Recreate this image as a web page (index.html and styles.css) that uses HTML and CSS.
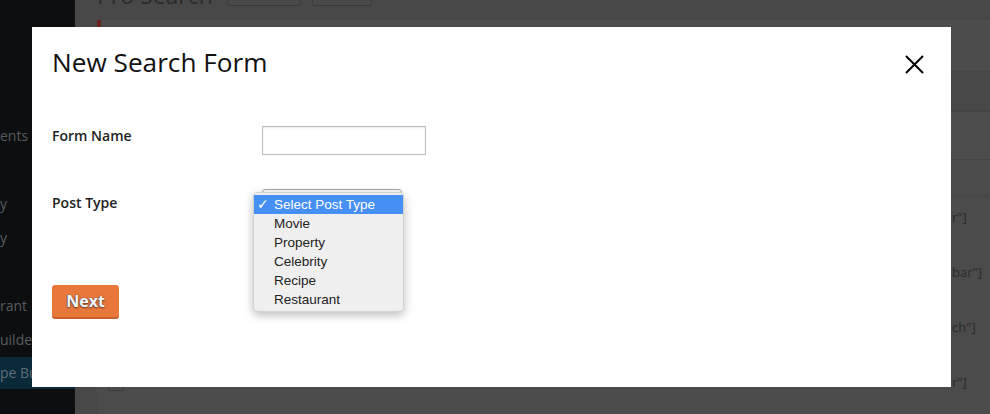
FILE: index.html
```html
<!DOCTYPE html>
<html lang="en">
<head>
<meta charset="utf-8">
<title>New Search Form</title>
<link rel="stylesheet" href="styles.css">
</head>
<body>
<div class="admin">
  <nav class="sidebar">
    <ul class="menu">
      <li>ents</li>
      <li></li>
      <li>y</li>
      <li>y</li>
      <li></li>
      <li>rant</li>
      <li>uilder</li>
      <li class="current">pe Builder</li>
    </ul>
  </nav>
  <main class="content">
    <header class="page-head">
      <h1>Pro Search</h1>
      <span class="ghost-btn wide"></span>
      <span class="ghost-btn"></span>
    </header>
    <div class="notice"></div>
    <div class="tablenav"></div>
    <div class="thead"></div>
    <div class="subhead"></div>
    <div class="row"><span class="cb"></span><span class="code">r"]</span></div>
    <div class="row"><span class="cb"></span><span class="code">bar"]</span></div>
    <div class="row"><span class="cb"></span><span class="code">ch"]</span></div>
    <div class="row"><span class="cb"></span><span class="code">r"]</span></div>
  </main>
</div>

<div class="modal" role="dialog" aria-label="New Search Form">
  <div class="modal-head">
    <h2 class="modal-title">New Search Form</h2>
    <button class="close" aria-label="Close">
      <svg width="19" height="19" viewBox="0 0 19 19"><path d="M1 1L18 18M18 1L1 18" stroke="#000" stroke-width="2" fill="none"/></svg>
    </button>
  </div>
  <div class="form-row first">
    <label class="field-label">Form Name</label>
    <span class="text-input"></span>
  </div>
  <div class="form-row second">
    <label class="field-label">Post Type</label>
    <div class="select-wrap">
      <span class="select-box"></span>
      <ul class="popup">
        <li class="selected"><span class="check">✓</span>Select Post Type</li>
        <li>Movie</li>
        <li>Property</li>
        <li>Celebrity</li>
        <li>Recipe</li>
        <li>Restaurant</li>
      </ul>
    </div>
  </div>
  <button class="next-btn">Next</button>
</div>
</body>
</html>
```
FILE: styles.css
```css
* { box-sizing: border-box; }
html, body { margin: 0; padding: 0; }
body {
  width: 990px;
  height: 414px;
  overflow: hidden;
  background: #484848;
  font-family: "Open Sans", "Liberation Sans", sans-serif;
}
.admin {
  display: flex;
  height: 414px;
}
.sidebar {
  width: 75px;
  flex: none;
  background: #0d0e10;
  overflow: hidden;
}
.menu {
  list-style: none;
  margin: 0;
  padding: 119px 0 0;
}
.menu li {
  height: 34px;
  line-height: 34px;
  font-size: 14px;
  color: #585b5f;
  white-space: nowrap;
}
.menu li.current {
  height: 32px;
  line-height: 32px;
  background: #0b2a39;
  color: #5e6d77;
}
.content {
  flex: 1;
  padding-left: 22px;
  overflow: hidden;
}
.page-head {
  display: flex;
  align-items: flex-start;
  height: 28px;
  margin-top: -22px;
}
.page-head h1 {
  margin: 3px 10px 0 0;
  font-size: 23px;
  line-height: 28px;
  font-weight: 400;
  color: #2a2a2a;
  width: 120px;
  white-space: nowrap;
}
.ghost-btn {
  width: 60px;
  height: 28px;
  border: 1px solid #3b3b3b;
  border-radius: 3px;
  background: #4a4a4a;
  margin-left: 11px;
}
.ghost-btn.wide { width: 74px; margin-left: 0; }
.notice {
  margin-top: 14px;
  height: 52px;
  background: #4c4c4c;
  border-left: 4px solid #6a1e1e;
  border-bottom: 1px solid #474747;
}
.tablenav {
  height: 39px;
  background: #484848;
}
.thead {
  height: 49px;
  background: #4d4d4d;
  border-top: 1px solid #444;
  border-bottom: 1px solid #444;
}
.subhead {
  height: 36px;
  background: #4b4b4b;
  border-bottom: 1px solid #454545;
}
.row {
  display: grid;
  grid-template-columns: 855px 1fr;
  height: 55px;
  background: #4b4b4b;
}
.cb {
  display: block;
  width: 16px;
  height: 16px;
  margin: 14px 0 0 11px;
  border: 1px solid #3a3a3a;
  border-radius: 2px;
}
.code {
  padding-top: 12px;
  font-size: 13px;
  line-height: 18px;
  color: #2a2a2a;
  white-space: nowrap;
}

/* modal */
.modal {
  position: fixed;
  left: 32px;
  top: 27px;
  width: 919px;
  height: 360px;
  background: #fff;
  padding: 17px 27px 0 20px;
}
.modal-head {
  display: flex;
  justify-content: space-between;
  align-items: flex-start;
  height: 36px;
}
.modal-title {
  margin: 0;
  font-size: 26.2px;
  line-height: 36px;
  font-weight: 400;
  color: #111;
}
.close {
  margin-top: 11px;
  padding: 0;
  border: 0;
  background: none;
  width: 19px;
  height: 19px;
  display: block;
}
.close svg { display: block; }
.form-row {
  display: grid;
  grid-template-columns: 210px auto;
  align-items: start;
}
.form-row.first { margin-top: 46px; }
.form-row.second { margin-top: 34px; }
.field-label {
  font-size: 14px;
  line-height: 20px;
  font-weight: 600;
  color: #222;
}
.second .field-label { margin-top: 4px; }
.text-input {
  display: block;
  width: 164px;
  height: 29px;
  border: 1px solid #bdbdbd;
  box-shadow: inset 0 1px 2px rgba(0,0,0,.07);
  background: #fff;
}
.select-wrap {
  position: relative;
  width: 140px;
  height: 21px;
}
.select-box {
  display: block;
  width: 140px;
  height: 21px;
  border: 1px solid #b0b0b0;
  border-top-color: #a4a4a4;
  border-radius: 4px;
  background: linear-gradient(#fdfdfd, #ececec);
}
.popup {
  position: absolute;
  left: -9px;
  top: 3px;
  width: 151px;
  height: 120px;
  margin: 0;
  padding: 2px 0 0;
  list-style: none;
  background: #efefef;
  border: 1px solid rgba(0,0,0,.12);
  border-radius: 5px;
  box-shadow: 0 3px 10px rgba(0,0,0,.28);
  font-family: "Liberation Sans", Arial, sans-serif;
  font-size: 13.5px;
  color: #222;
}
.popup li {
  position: relative;
  height: 19px;
  line-height: 19px;
  padding-left: 20px;
  white-space: nowrap;
}
.popup li.selected {
  background: #468ff5;
  color: #fff;
}
.check {
  position: absolute;
  left: 3px;
  top: 0;
  font-family: "DejaVu Sans", sans-serif;
  font-size: 14px;
}
.next-btn {
  display: flex;
  align-items: center;
  justify-content: center;
  margin-top: 72px;
  width: 67px;
  height: 34px;
  padding: 0 0 1px;
  border: 0;
  border-bottom: 2px solid #c9612c;
  border-radius: 3px;
  background: #e8773b;
  font-family: "Open Sans", sans-serif;
  font-size: 16px;
  font-weight: 700;
  color: #f3f7fb;
  text-shadow: 0 0 1px #2b3d52, 0 1px 2px rgba(0,0,0,.55);
}
```
